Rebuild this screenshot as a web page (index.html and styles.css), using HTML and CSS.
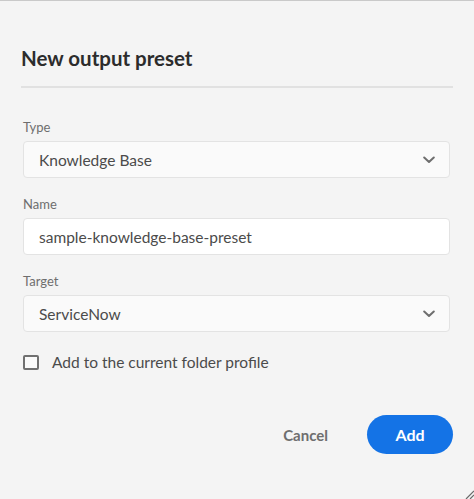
FILE: index.html
```html
<!DOCTYPE html>
<html>
<head>
<meta charset="utf-8">
<link rel="stylesheet" href="styles.css">
</head>
<body>
<div class="dialog">
  <h2 class="title">New output preset</h2>
  <div class="divider"></div>
  <form class="form">
    <div class="field">
      <label class="label">Type</label>
      <div class="select">
        <span class="value">Knowledge Base</span>
        <svg class="chev" width="12" height="8" viewBox="0 0 12 8"><path d="M1.2 1.5 L6 6 L10.8 1.5" fill="none" stroke="#6e6e6e" stroke-width="2" stroke-linecap="round" stroke-linejoin="round"/></svg>
      </div>
    </div>
    <div class="field">
      <label class="label">Name</label>
      <div class="input"><span class="value">sample-knowledge-base-preset</span></div>
    </div>
    <div class="field">
      <label class="label">Target</label>
      <div class="select">
        <span class="value">ServiceNow</span>
        <svg class="chev" width="12" height="8" viewBox="0 0 12 8"><path d="M1.2 1.5 L6 6 L10.8 1.5" fill="none" stroke="#6e6e6e" stroke-width="2" stroke-linecap="round" stroke-linejoin="round"/></svg>
      </div>
    </div>
    <div class="check">
      <span class="box"></span>
      <span class="check-label">Add to the current folder profile</span>
    </div>
  </form>
  <div class="actions">
    <button class="btn-cancel" type="button">Cancel</button>
    <button class="btn-add" type="button">Add</button>
  </div>
</div>
<svg class="grip" width="10" height="10" viewBox="0 0 10 10"><path d="M2 10 L10 2 M6 10 L10 6" stroke="#6a6a6a" stroke-width="1.2"/></svg>
</body>
</html>
```

FILE: styles.css
```css
html, body {
  margin: 0;
  padding: 0;
}
body {
  width: 474px;
  height: 499px;
  box-sizing: border-box;
  background: #f4f4f4;
  border-top: 1px solid #c9c9c9;
  font-family: "Lato", "Open Sans", sans-serif;
  color: #4b4b4b;
  position: relative;
  overflow: hidden;
}
.dialog {
  padding: 43px 21px 0 21px;
  display: flex;
  flex-direction: column;
}
.title {
  margin: 0;
  font-size: 20.5px;
  line-height: 28px;
  font-weight: 700;
  color: #2c2c2c;
}
.divider {
  height: 2px;
  background: #e1e1e1;
  margin-top: 14px;
}
.form {
  padding: 0 3px 0 2px;
  display: flex;
  flex-direction: column;
  margin-top: 30px;
}
.field {
  display: flex;
  flex-direction: column;
  gap: 5px;
  margin-bottom: 17px;
}
.label {
  font-size: 13px;
  line-height: 18px;
  color: #6e6e6e;
}
.select, .input {
  height: 37px;
  box-sizing: border-box;
  border: 1px solid #e3e3e3;
  border-radius: 4px;
  display: flex;
  align-items: center;
  padding: 0 14px 0 15px;
}
.select {
  background: #fafafa;
  justify-content: space-between;
}
.input {
  background: #ffffff;
}
.value {
  font-size: 15.5px;
  color: #4b4b4b;
}
.check {
  display: flex;
  align-items: center;
  gap: 13px;
  margin-top: 4px;
}
.box {
  width: 16px;
  height: 15px;
  box-sizing: border-box;
  border: 2px solid #707070;
  border-radius: 2px;
  background: #fafafa;
}
.check-label {
  font-size: 15.5px;
  color: #4b4b4b;
}
.actions {
  display: flex;
  justify-content: flex-end;
  align-items: center;
  gap: 39px;
  margin-top: 44px;
}
.btn-cancel {
  border: none;
  background: none;
  font-family: inherit;
  font-size: 15px;
  font-weight: 700;
  color: #6e6e6e;
  padding: 0;
}
.btn-add {
  width: 86px;
  height: 39px;
  border: none;
  border-radius: 20px;
  background: #1473e6;
  color: #ffffff;
  font-family: inherit;
  font-size: 16px;
  font-weight: 700;
  padding: 0;
}
.grip {
  position: absolute;
  right: 0;
  bottom: 0;
}
```
